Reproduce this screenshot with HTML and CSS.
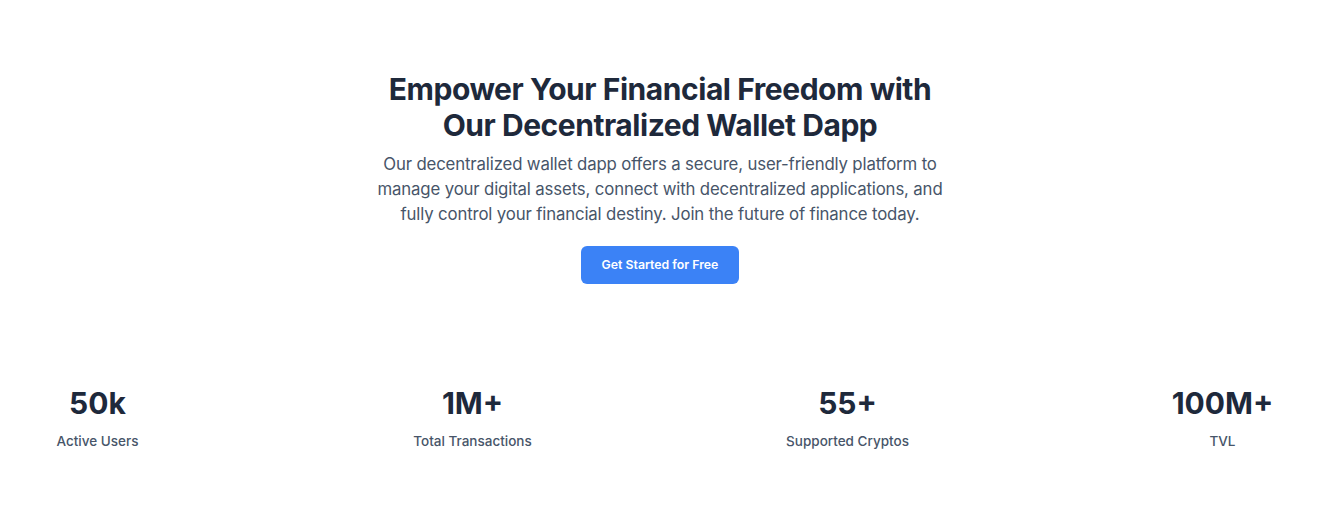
FILE: index.html
```html
<!DOCTYPE html>
<html lang="en">
<head>
<meta charset="utf-8">
<title>Decentralized Wallet Dapp</title>
<link rel="stylesheet" href="styles.css">
</head>
<body>
<main class="page">
  <section class="hero">
    <h1 class="hero-title">Empower Your Financial Freedom with<br>Our Decentralized Wallet Dapp</h1>
    <p class="hero-text">Our decentralized wallet dapp offers a secure, user-friendly platform to manage your digital assets, connect with decentralized applications, and fully control your financial destiny. Join the future of finance today.</p>
    <a class="btn-primary" href="#">Get Started for Free</a>
  </section>
  <section class="stats">
    <div class="stat"><div class="stat-value">50k</div><div class="stat-label">Active Users</div></div>
    <div class="stat"><div class="stat-value">1M+</div><div class="stat-label">Total Transactions</div></div>
    <div class="stat"><div class="stat-value">55+</div><div class="stat-label">Supported Cryptos</div></div>
    <div class="stat"><div class="stat-value">100M+</div><div class="stat-label">TVL</div></div>
  </section>
</main>
</body>
</html>
```
FILE: styles.css
```css
html, body {
  margin: 0;
  padding: 0;
  background: #ffffff;
}
body {
  font-family: Inter, "Noto Sans", sans-serif;
  color: #1f2937;
  -webkit-font-smoothing: antialiased;
}
.page {
  width: 1320px;
}
.hero {
  display: flex;
  flex-direction: column;
  align-items: center;
  text-align: center;
  padding-top: 71px;
}
.hero-title {
  margin: 0;
  font-size: 30px;
  line-height: 36px;
  font-weight: 700;
  color: #1e293b;
  letter-spacing: -0.45px;
}
.hero-text {
  margin: 9px 0 0;
  width: 568px;
  font-size: 16.8px;
  line-height: 25px;
  letter-spacing: -0.15px;
  color: #475569;
}
.btn-primary {
  margin-top: 19px;
  display: inline-block;
  background: #3b82f6;
  color: #ffffff;
  text-decoration: none;
  font-size: 12.3px;
  font-weight: 600;
  line-height: 38px;
  height: 38px;
  padding: 0 21px;
  border-radius: 6px;
}
.stats {
  display: grid;
  grid-template-columns: repeat(4, 195px);
  column-gap: 180px;
  margin-top: 101px;
  text-align: center;
}
.stat-value {
  font-size: 30px;
  line-height: 36px;
  font-weight: 700;
  color: #1e293b;
}
.stat-label {
  margin-top: 10px;
  font-size: 13.5px;
  line-height: 20px;
  font-weight: 500;
  color: #475569;
}
```
